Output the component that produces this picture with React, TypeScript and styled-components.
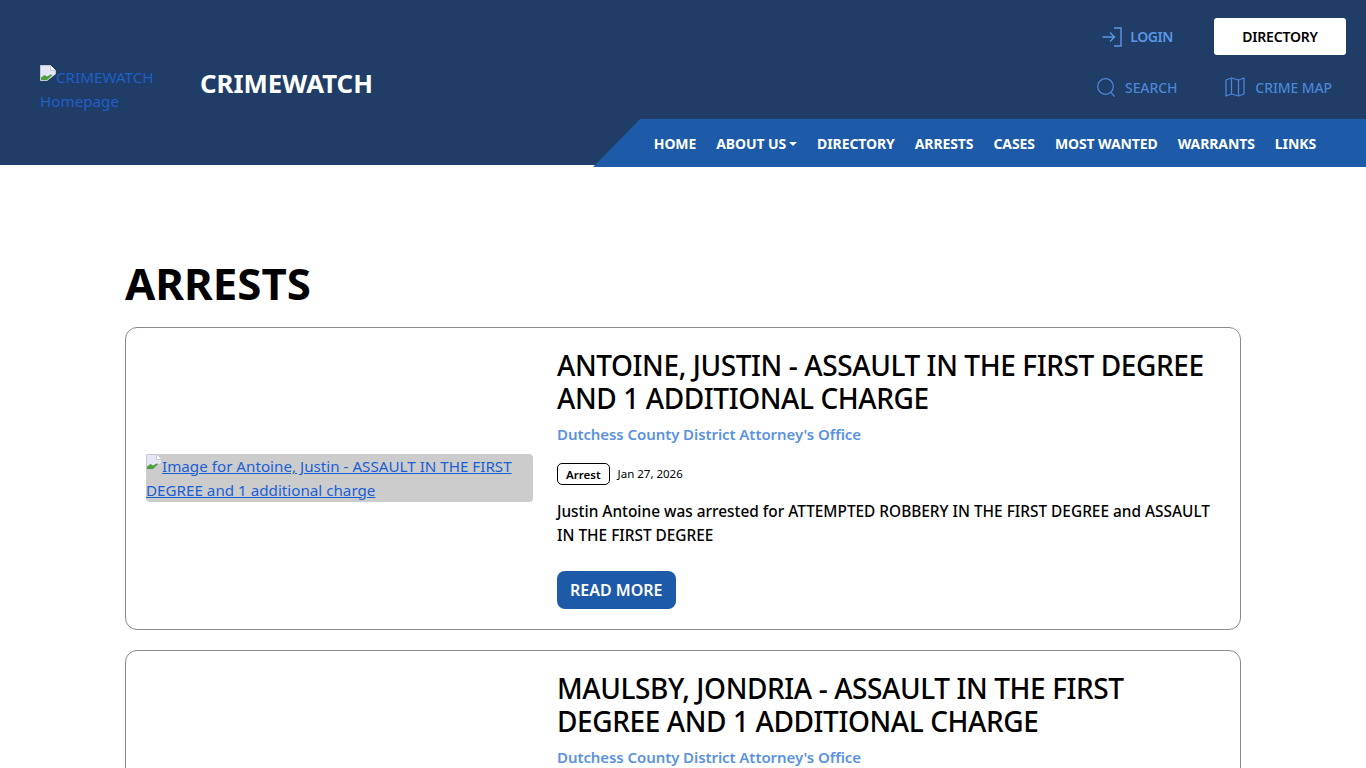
import React from 'react';
import styled, { createGlobalStyle } from 'styled-components';

const NAV_ITEMS = ['Home', 'About Us', 'Directory', 'Arrests', 'Cases', 'Most Wanted', 'Warrants', 'Links'];

const ARRESTS = [
  {
    title: 'ANTOINE, JUSTIN - ASSAULT IN THE FIRST DEGREE AND 1 ADDITIONAL CHARGE',
    alt: 'Image for Antoine, Justin - ASSAULT IN THE FIRST DEGREE and 1 additional charge',
    date: 'Jan 27, 2026',
    text: 'Justin Antoine was arrested for ATTEMPTED ROBBERY IN THE FIRST DEGREE and ASSAULT IN THE FIRST DEGREE',
  },
  {
    title: 'MAULSBY, JONDRIA - ASSAULT IN THE FIRST DEGREE AND 1 ADDITIONAL CHARGE',
    alt: 'Image for Maulsby, Jondria - ASSAULT IN THE FIRST DEGREE and 1 additional charge',
    date: 'Jan 27, 2026',
    text: 'Jondria Maulsby was arrested for ASSAULT IN THE FIRST DEGREE and CRIMINAL POSSESSION OF A WEAPON',
  },
];

const BrokenImage: React.FC = () => (
  <BrokenIcon viewBox="0 0 16 16" aria-hidden="true">
    <path d="M0.5 0.5H10.5L15.5 5.5V9L7 15.5H0.5Z" fill="#e4e6f6" stroke="#c4c7d6" />
    <path d="M10.5 0.5V5.5H15.5" fill="#ffffff" stroke="#c4c7d6" />
    <path d="M1 15V12.5L4.5 10L7 11.5L10.5 9.5L12.5 10L7 15Z" fill="#4f9f3c" />
  </BrokenIcon>
);

const App: React.FC = () => {
  return (
    <>
      <GlobalStyle />
      <Header>
        <Brand>
          <LogoLink href="#">
            <BrokenImage />
            CRIMEWATCH Homepage
          </LogoLink>
          <SiteName>CRIMEWATCH</SiteName>
        </Brand>
        <HeaderRight>
          <TopRow>
            <LoginLink href="#">
              <svg width="20" height="20" viewBox="0 0 20 20" fill="none" stroke="currentColor" strokeWidth="1.4">
                <path d="M0.5 10H12M8 5.5L12.5 10L8 14.5" />
                <path d="M12 1H19V19H12" />
              </svg>
              LOGIN
            </LoginLink>
            <DirectoryButton href="#">DIRECTORY</DirectoryButton>
          </TopRow>
          <ToolRow>
            <ToolLink href="#">
              <svg width="18" height="19" viewBox="0 0 18 19" fill="none" stroke="currentColor" strokeWidth="1.3">
                <circle cx="8.5" cy="8.5" r="7.8" />
                <path d="M14 14.5L17.5 18.5" />
              </svg>
              SEARCH
            </ToolLink>
            <ToolLink href="#">
              <svg width="20" height="20" viewBox="0 0 20 20" fill="none" stroke="currentColor" strokeWidth="1.3" strokeLinejoin="round">
                <path d="M1 3L6.5 1L13.5 3L19 1V17L13.5 19L6.5 17L1 19Z" />
                <path d="M6.5 1V17M13.5 3V19" />
              </svg>
              CRIME MAP
            </ToolLink>
          </ToolRow>
          <MainNav>
            {NAV_ITEMS.map((item) => (
              <NavLink key={item} href="#" $dropdown={item === 'About Us'}>
                {item}
              </NavLink>
            ))}
          </MainNav>
        </HeaderRight>
      </Header>
      <Main>
        <PageTitle>ARRESTS</PageTitle>
        <CardList>
          {ARRESTS.map((arrest) => (
            <Card key={arrest.title}>
              <Thumb href="#">
                <BrokenImage />
                {arrest.alt}
              </Thumb>
              <Details>
                <CardTitle>{arrest.title}</CardTitle>
                <Agency href="#">Dutchess County District Attorney's Office</Agency>
                <Meta>
                  <Tag>Arrest</Tag>
                  <DateText>{arrest.date}</DateText>
                </Meta>
                <Summary>{arrest.text}</Summary>
                <ReadMore href="#">READ MORE</ReadMore>
              </Details>
            </Card>
          ))}
        </CardList>
      </Main>
    </>
  );
};

export default App;

const GlobalStyle = createGlobalStyle`
  html {
    overflow: hidden;
  }

  body {
    margin: 0;
    background: #ffffff;
    font-family: 'Noto Sans', 'Open Sans', sans-serif;
    color: #000000;
  }

  a {
    text-decoration: none;
  }
`;

const Header = styled.header`
  height: 165px;
  background-color: #1f3d66;

  display: flex;
  justify-content: space-between;
`;

const Brand = styled.div`
  padding-left: 40px;

  display: flex;
  align-items: center;
  gap: 40px;
`;

const BrokenIcon = styled.svg`
  width: 16px;
  height: 16px;
  vertical-align: 2px;
`;

const LogoLink = styled.a`
  width: 120px;
  margin-top: 12px;

  font-size: 15.2px;
  line-height: 24px;
  color: #1f5fc8;
`;

const SiteName = styled.span`
  font-weight: 700;
  font-size: 25.8px;
  line-height: 36px;
  color: #ffffff;
`;

const HeaderRight = styled.div`
  width: 773px;

  display: flex;
  flex-direction: column;
  align-items: flex-end;
`;

const TopRow = styled.div`
  flex: none;
  height: 73px;
  padding-right: 20px;

  display: flex;
  align-items: center;
  gap: 41px;
`;

const LoginLink = styled.a`
  display: flex;
  align-items: center;
  gap: 8px;

  font-weight: 600;
  font-size: 14px;
  letter-spacing: -0.4px;
  color: #5b96e6;
`;

const DirectoryButton = styled.a`
  width: 132px;
  height: 37px;
  border-radius: 3px;
  background-color: #ffffff;

  display: flex;
  justify-content: center;
  align-items: center;

  font-weight: 600;
  font-size: 14px;
  letter-spacing: -0.2px;
  color: #000000;
`;

const ToolRow = styled.div`
  flex: none;
  height: 28px;
  margin-bottom: 18px;
  padding-right: 34px;

  display: flex;
  align-items: center;
  gap: 48px;
`;

const ToolLink = styled.a`
  display: flex;
  align-items: center;
  gap: 10px;

  font-weight: 500;
  font-size: 14px;
  letter-spacing: -0.1px;
  color: #4a86d6;
`;

const MainNav = styled.nav`
  flex: none;
  width: 773px;
  height: 48px;
  padding-right: 50px;
  box-sizing: border-box;
  background-color: #1d5aa8;
  clip-path: polygon(47px 0, 100% 0, 100% 100%, 0 100%);

  display: flex;
  justify-content: flex-end;
  align-items: center;
  gap: 20px;

  position: relative;
  z-index: 1;
`;

const NavLink = styled.a<{ $dropdown?: boolean }>`
  font-weight: 700;
  font-size: 14px;
  letter-spacing: -0.1px;
  text-transform: uppercase;
  color: #ffffff;

  ${({ $dropdown }) =>
    $dropdown &&
    `
    &::after {
      content: '';
      display: inline-block;
      margin-left: 3px;
      vertical-align: 3px;
      border-top: 4px solid #ffffff;
      border-left: 4px solid transparent;
      border-right: 4px solid transparent;
    }
  `}
`;

const Main = styled.main`
  width: 1116px;
  margin: 0 auto;
  padding-top: 90px;
`;

const PageTitle = styled.h1`
  margin: 0 0 16px;

  font-weight: 700;
  font-size: 43.8px;
  line-height: 56px;
  color: #000000;
`;

const CardList = styled.div`
  display: flex;
  flex-direction: column;
  gap: 20px;
`;

const Card = styled.article`
  padding: 20px;
  box-sizing: border-box;
  border: 1px solid #8a8a8a;
  border-radius: 12px;

  display: grid;
  grid-template-columns: 387px 1fr;
  gap: 24px;
  align-items: center;
`;

const Thumb = styled.a`
  margin-bottom: 2px;
  border-radius: 4px;
  background-color: #cccccc;

  font-size: 15.2px;
  line-height: 24px;
  color: #1a5fd6;
  text-decoration: underline;
`;

const Details = styled.div`
  display: flex;
  flex-direction: column;
  align-items: flex-start;
`;

const CardTitle = styled.h2`
  margin: 0.5px 0 6.5px;

  font-weight: 500;
  font-size: 28px;
  line-height: 33.6px;
  letter-spacing: -0.4px;
  color: #000000;
`;

const Agency = styled.a`
  margin-bottom: 17px;

  font-weight: 600;
  font-size: 15px;
  line-height: 24px;
  letter-spacing: -0.08px;
  color: #5b92e0;
`;

const Meta = styled.div`
  margin-bottom: 15px;

  display: flex;
  align-items: center;
  gap: 8px;
`;

const Tag = styled.span`
  height: 20px;
  padding: 0 8px;
  border: 1px solid #000000;
  border-radius: 5px;

  display: flex;
  align-items: center;

  font-weight: 600;
  font-size: 11.5px;
`;

const DateText = styled.span`
  font-size: 11.5px;
  line-height: 18px;
`;

const Summary = styled.p`
  margin: 0 0 23px;

  font-weight: 500;
  font-size: 15.4px;
  line-height: 24px;
`;

const ReadMore = styled.a`
  height: 38px;
  padding: 0 13px;
  border-radius: 8px;
  background-color: #1d5aa8;

  display: flex;
  align-items: center;

  font-weight: 600;
  font-size: 16px;
  color: #ffffff;
`;
